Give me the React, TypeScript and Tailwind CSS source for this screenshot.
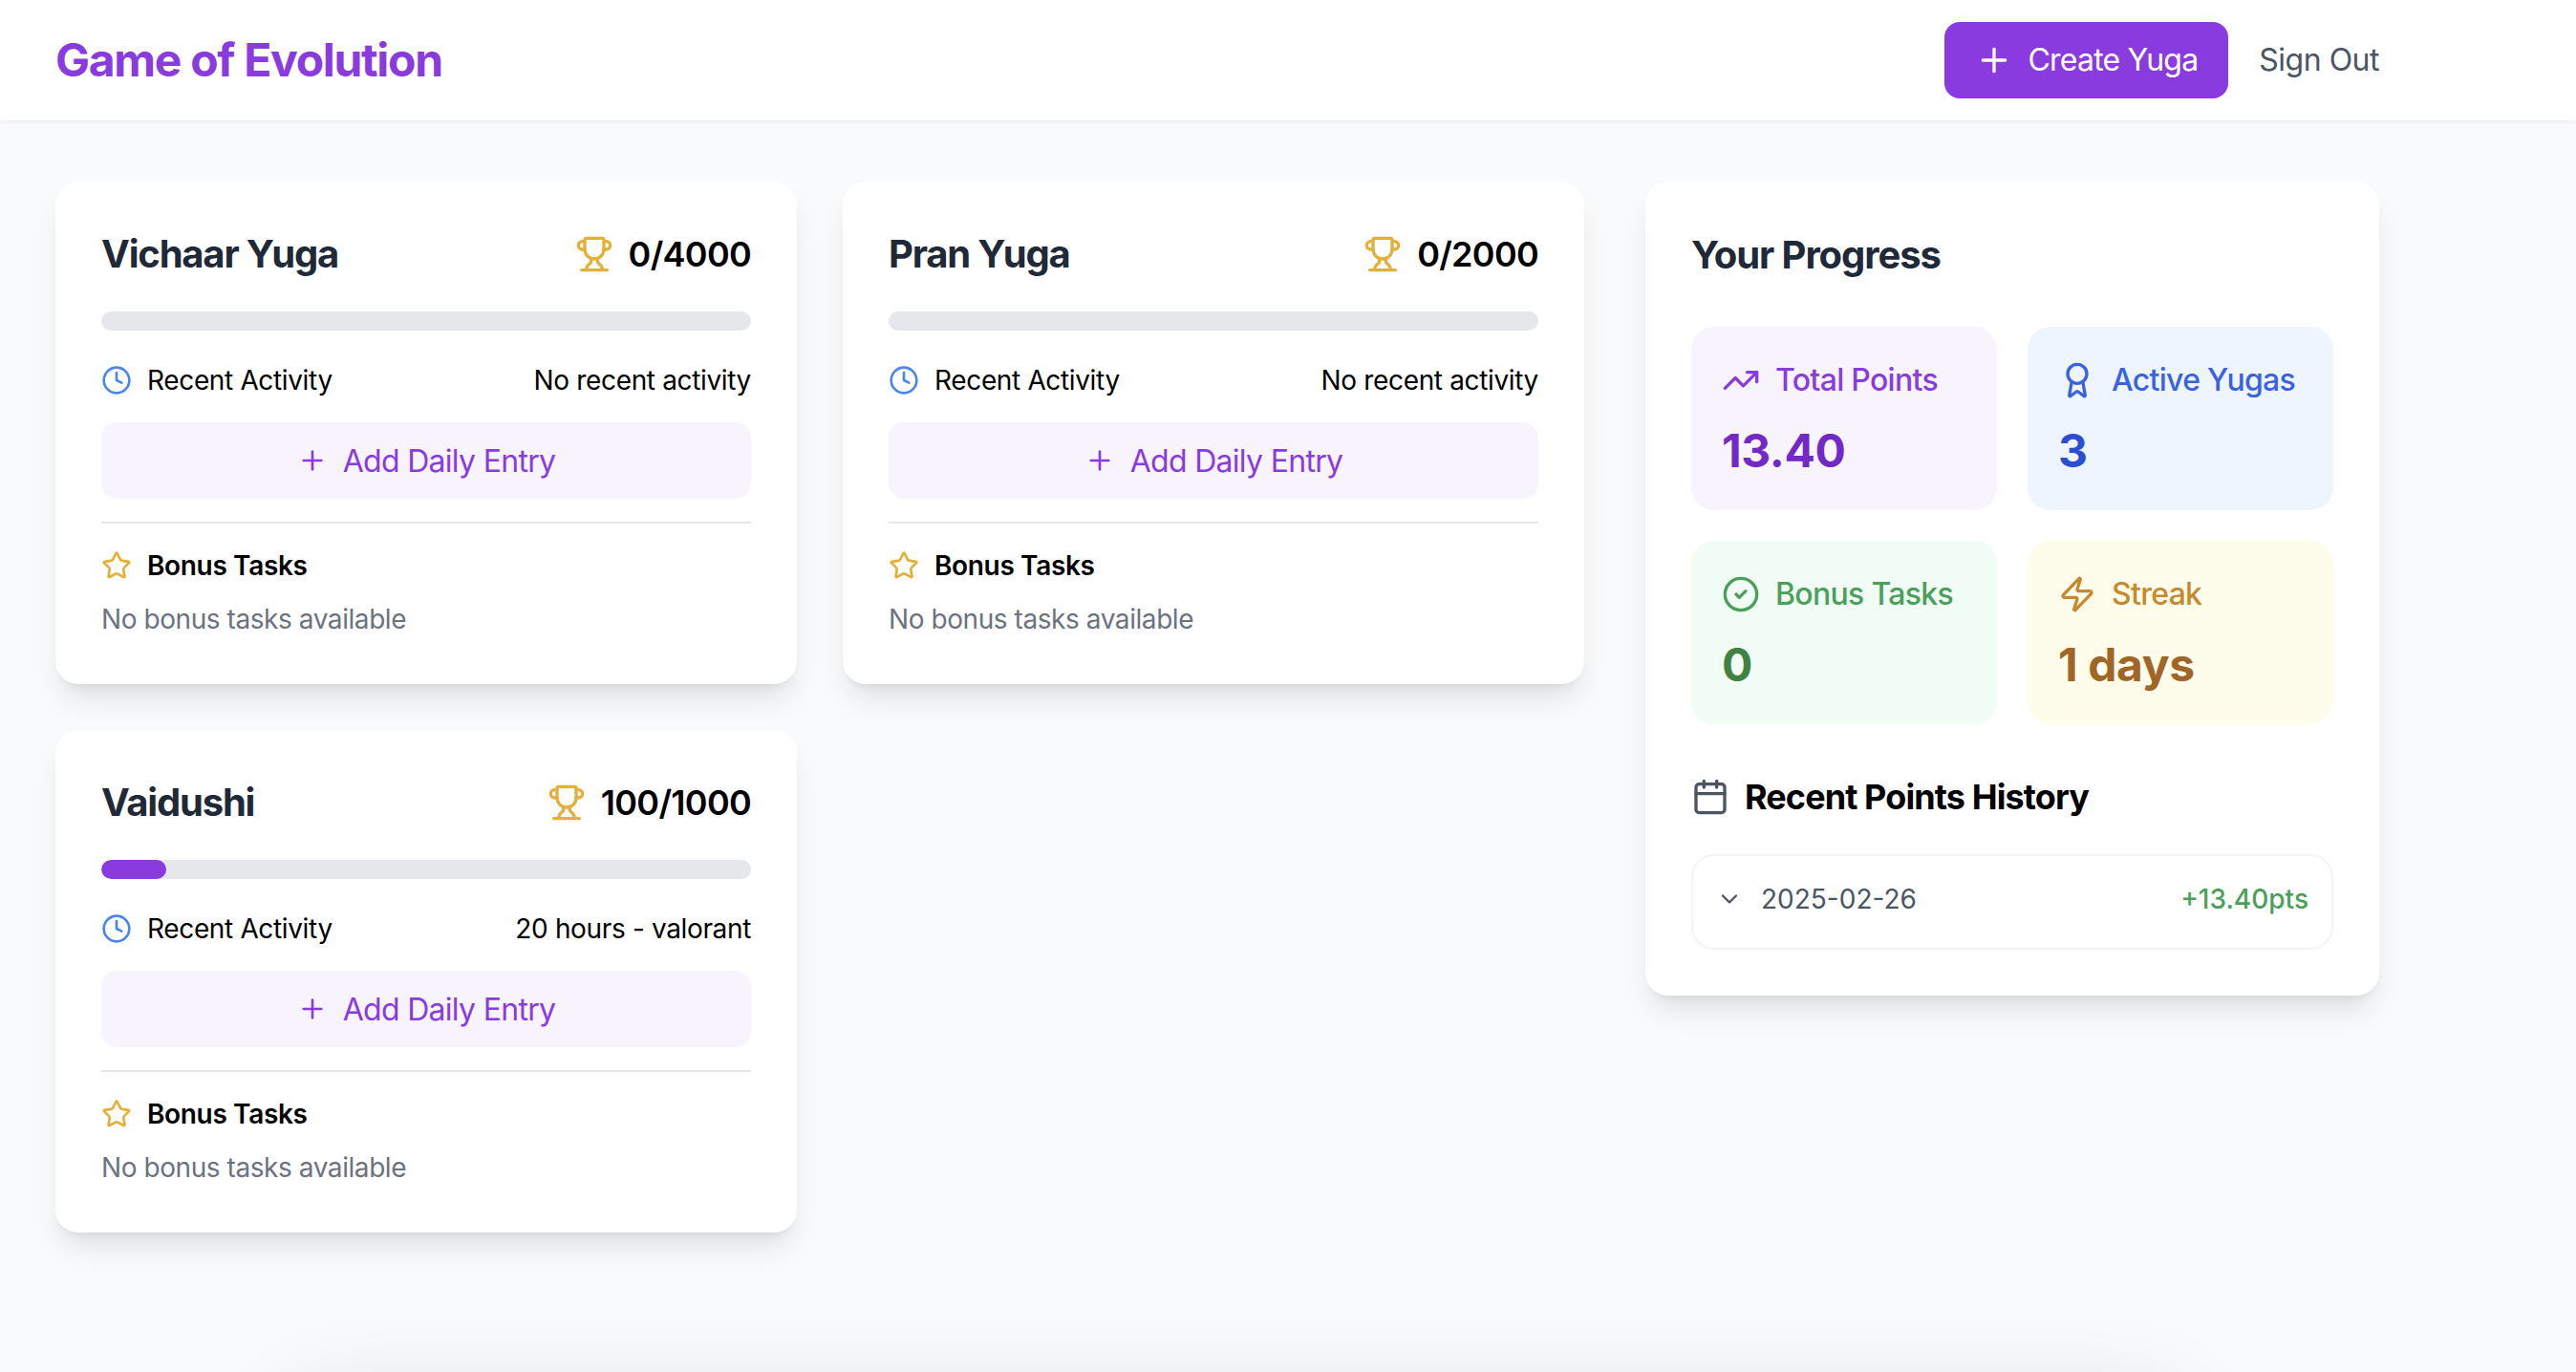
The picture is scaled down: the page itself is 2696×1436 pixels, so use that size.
import React from "react";
import {
  Award,
  Calendar,
  ChevronDown,
  CircleCheck,
  Clock,
  Plus,
  Star,
  TrendingUp,
  Trophy,
  Zap,
} from "lucide-react";

const yugas = [
  { id: 1, name: "Vichaar Yuga", score: "0/4000", percent: 0, recent: "No recent activity" },
  { id: 2, name: "Pran Yuga", score: "0/2000", percent: 0, recent: "No recent activity" },
  { id: 3, name: "Vaidushi", score: "100/1000", percent: 10, recent: "20 hours - valorant" },
];

const YugaCard = ({ yuga }: { yuga: (typeof yugas)[number] }) => {
  return (
    <div className="rounded-3xl bg-white p-12 h-[526px] shadow-[0_20px_30px_-6px_rgba(0,0,0,0.1),0_8px_12px_-8px_rgba(0,0,0,0.1)]">
      <div className="flex items-center justify-between h-[56px]">
        <h2 className="text-[40px] leading-[58px] font-bold tracking-[-1.2px] text-[#1f2937]">{yuga.name}</h2>
        <div className="flex items-center gap-4">
          <Trophy size={40} className="text-[#e3b13a]" />
          <span className="text-[36px] leading-[56px] font-semibold tracking-[-0.7px] text-black">{yuga.score}</span>
        </div>
      </div>
      <div className="mt-8 h-5 rounded-full bg-[#e5e7eb] overflow-hidden">
        <div className="h-full rounded-full bg-[#8a3bdf]" style={{ width: `${yuga.percent}%` }} />
      </div>
      <div className="mt-8 flex items-center justify-between h-[40px]">
        <div className="flex items-center gap-4">
          <Clock size={32} className="text-[#4a86ee]" />
          <span className="text-[28px] leading-[40px] tracking-[-0.35px] text-black">Recent Activity</span>
        </div>
        <span className="text-[28px] leading-[40px] tracking-[-0.35px] text-black">{yuga.recent}</span>
      </div>
      <button className="mt-6 w-full h-20 flex items-center justify-center gap-4 rounded-2xl bg-[#f7f4fe] text-[#8a3bdf]">
        <Plus size={32} />
        <span className="text-[32px] leading-[48px] pt-[2px] tracking-[-0.7px]">Add Daily Entry</span>
      </button>
      <div className="mt-6 border-t-2 border-[#e5e7eb] pt-6">
        <div className="flex items-center gap-4 h-[40px]">
          <Star size={32} className="text-[#e3b13a]" />
          <span className="text-[28px] leading-[40px] font-semibold tracking-[-0.35px] text-black">Bonus Tasks</span>
        </div>
        <p className="mt-4 text-[28px] leading-[40px] tracking-[-0.43px] text-[#6b7280]">No bonus tasks available</p>
      </div>
    </div>
  );
};

const stats = [
  { label: "Total Points", value: "13.40", Icon: TrendingUp, bg: "bg-[#f7f4fe]", labelColor: "text-[#8a3bdf]", valueColor: "text-[#7229c8]" },
  { label: "Active Yugas", value: "3", Icon: Award, bg: "bg-[#eef5fe]", labelColor: "text-[#3a63e4]", valueColor: "text-[#2b4fd4]" },
  { label: "Bonus Tasks", value: "0", Icon: CircleCheck, bg: "bg-[#f1fcf4]", labelColor: "text-[#4aa05a]", valueColor: "text-[#3f8243]" },
  { label: "Streak", value: "1 days", Icon: Zap, bg: "bg-[#fefdeb]", labelColor: "text-[#c68a2e]", valueColor: "text-[#a16527]" },
];

export default function App() {
  return (
    <div className="relative h-[1436px] overflow-hidden bg-[#f9fafb] font-['Inter',sans-serif]">
      <header className="h-[126px] bg-white shadow-[0_2px_4px_0_rgba(0,0,0,0.05)]">
        <div className="ml-[58px] w-[2432px] h-full flex items-center justify-between">
          <h1 className="text-[48px] font-bold tracking-[-1.3px] text-[#8a3bdf]">Game of Evolution</h1>
          <div className="flex items-center gap-8">
            <button className="h-20 flex items-center gap-4 rounded-2xl bg-[#8a3bdf] px-8 text-white">
              <Plus size={40} />
              <span className="text-[32px] tracking-[-0.8px]">Create Yuga</span>
            </button>
            <button className="text-[32px] tracking-[-0.5px] text-[#4b5563]">Sign Out</button>
          </div>
        </div>
      </header>

      <main className="ml-[58px] w-[2432px] pt-16 grid grid-cols-3 gap-16 items-start">
        <div className="col-span-2 grid grid-cols-2 gap-12">
          {yugas.map((yuga) => (
            <YugaCard key={yuga.id} yuga={yuga} />
          ))}
        </div>

        <div className="rounded-3xl bg-white p-12 h-[852px] shadow-[0_20px_30px_-6px_rgba(0,0,0,0.1),0_8px_12px_-8px_rgba(0,0,0,0.1)]">
          <h2 className="text-[40px] leading-[58px] font-bold tracking-[-1.1px] text-[#1f2937]">Your Progress</h2>
          <div className="mt-[46px] grid grid-cols-2 gap-8">
            {stats.map(({ label, value, Icon, bg, labelColor, valueColor }) => (
              <div key={label} className={`h-[192px] rounded-3xl px-8 pt-[34px] ${bg}`}>
                <div className={`flex items-center gap-4 ${labelColor}`}>
                  <Icon size={40} className="shrink-0" />
                  <span className="whitespace-nowrap text-[32px] leading-[44px] font-medium tracking-[-0.7px]">{label}</span>
                </div>
                <div className={`mt-[20px] text-[48px] leading-[64px] font-bold tracking-[-0.4px] ${valueColor}`}>{value}</div>
              </div>
            ))}
          </div>
          <div className="mt-12 flex items-center gap-4">
            <Calendar size={40} className="text-[#4b5563]" />
            <h3 className="text-[36px] leading-[56px] font-bold tracking-[-0.9px] text-black">Recent Points History</h3>
          </div>
          <div className="mt-8 h-[100px] rounded-3xl border-2 border-[#f3f4f6] px-6 flex items-start pt-[25px] justify-between">
            <div className="flex items-center gap-[19px]">
              <ChevronDown size={28} className="text-[#4b5563]" />
              <span className="text-[28px] leading-[40px] text-[#4b5563]">2025-02-26</span>
            </div>
            <span className="text-[28px] leading-[40px] font-medium text-[#4aa05a]">+13.40pts</span>
          </div>
        </div>
      </main>

      {/* shadow of something sitting just under the fold */}
      <div className="absolute left-[310px] top-[1470px] h-[200px] w-[1970px] rounded-3xl bg-white shadow-[0_0_100px_0_rgba(0,0,0,0.14)]" />
    </div>
  );
}
